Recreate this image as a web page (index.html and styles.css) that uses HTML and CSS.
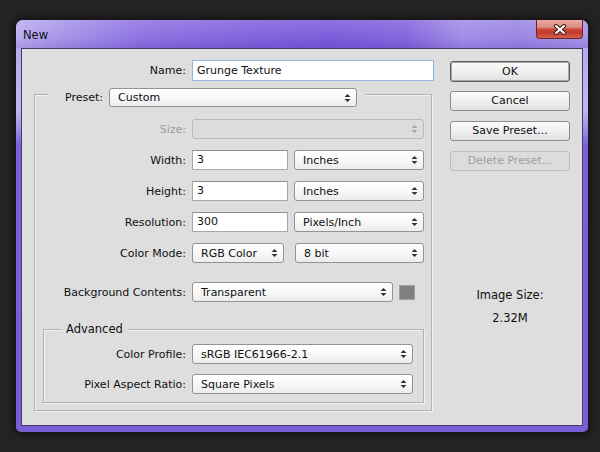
FILE: index.html
```
<!DOCTYPE html>
<html>
<head>
<meta charset="utf-8">
<link rel="stylesheet" href="styles.css">
</head>
<body>
<div class="window">
  <div class="titlebar">
    <span class="title">New</span>
    <div class="close">
      <svg width="14" height="11" viewBox="0 0 14 11"><path d="M3 2 L11 9 M11 2 L3 9" stroke="#3a2020" stroke-width="4" stroke-linecap="round"/><path d="M3 2 L11 9 M11 2 L3 9" stroke="#ffffff" stroke-width="2" stroke-linecap="round"/></svg>
    </div>
  </div>
  <div class="content">
    <div class="left">
      <div class="row name-row">
        <label class="lbl lbl-name">Name:</label>
        <div class="inp inp-name focus">Grunge Texture</div>
      </div>
      <div class="group outer">
        <div class="legend preset-legend">
          <label class="lbl-legend">Preset:</label>
          <div class="sel sel-preset"><span>Custom</span><svg class="arr" width="7" height="10" viewBox="0 0 7 10"><path d="M0.5 4 L3.5 1 L6.5 4 Z M0.5 6 L3.5 9 L6.5 6 Z" fill="#333"/></svg></div>
        </div>
        <div class="row">
          <label class="lbl disabled">Size:</label>
          <div class="sel sel-full dis"><span></span><svg class="arr" width="7" height="10" viewBox="0 0 7 10"><path d="M0.5 4 L3.5 1 L6.5 4 Z M0.5 6 L3.5 9 L6.5 6 Z" fill="#a8a8a8"/></svg></div>
        </div>
        <div class="row">
          <label class="lbl">Width:</label>
          <div class="inp inp-num">3</div>
          <div class="sel sel-unit"><span>Inches</span><svg class="arr" width="7" height="10" viewBox="0 0 7 10"><path d="M0.5 4 L3.5 1 L6.5 4 Z M0.5 6 L3.5 9 L6.5 6 Z" fill="#333"/></svg></div>
        </div>
        <div class="row">
          <label class="lbl">Height:</label>
          <div class="inp inp-num">3</div>
          <div class="sel sel-unit"><span>Inches</span><svg class="arr" width="7" height="10" viewBox="0 0 7 10"><path d="M0.5 4 L3.5 1 L6.5 4 Z M0.5 6 L3.5 9 L6.5 6 Z" fill="#333"/></svg></div>
        </div>
        <div class="row">
          <label class="lbl">Resolution:</label>
          <div class="inp inp-num">300</div>
          <div class="sel sel-unit"><span>Pixels/Inch</span><svg class="arr" width="7" height="10" viewBox="0 0 7 10"><path d="M0.5 4 L3.5 1 L6.5 4 Z M0.5 6 L3.5 9 L6.5 6 Z" fill="#333"/></svg></div>
        </div>
        <div class="row">
          <label class="lbl">Color Mode:</label>
          <div class="sel sel-mode"><span>RGB Color</span><svg class="arr" width="7" height="10" viewBox="0 0 7 10"><path d="M0.5 4 L3.5 1 L6.5 4 Z M0.5 6 L3.5 9 L6.5 6 Z" fill="#333"/></svg></div>
          <div class="sel sel-bit"><span>8 bit</span><svg class="arr" width="7" height="10" viewBox="0 0 7 10"><path d="M0.5 4 L3.5 1 L6.5 4 Z M0.5 6 L3.5 9 L6.5 6 Z" fill="#333"/></svg></div>
        </div>
        <div class="row bg-row">
          <label class="lbl">Background Contents:</label>
          <div class="sel sel-bg"><span>Transparent</span><svg class="arr" width="7" height="10" viewBox="0 0 7 10"><path d="M0.5 4 L3.5 1 L6.5 4 Z M0.5 6 L3.5 9 L6.5 6 Z" fill="#333"/></svg></div>
          <div class="swatch"></div>
        </div>
        <div class="group advanced">
          <div class="legend adv-legend">Advanced</div>
          <div class="row">
            <label class="lbl lbl-adv">Color Profile:</label>
            <div class="sel sel-adv"><span>sRGB IEC61966-2.1</span><svg class="arr" width="7" height="10" viewBox="0 0 7 10"><path d="M0.5 4 L3.5 1 L6.5 4 Z M0.5 6 L3.5 9 L6.5 6 Z" fill="#333"/></svg></div>
          </div>
          <div class="row">
            <label class="lbl lbl-adv">Pixel Aspect Ratio:</label>
            <div class="sel sel-adv"><span>Square Pixels</span><svg class="arr" width="7" height="10" viewBox="0 0 7 10"><path d="M0.5 4 L3.5 1 L6.5 4 Z M0.5 6 L3.5 9 L6.5 6 Z" fill="#333"/></svg></div>
          </div>
        </div>
      </div>
    </div>
    <div class="right">
      <div class="btn default">OK</div>
      <div class="btn">Cancel</div>
      <div class="btn">Save Preset...</div>
      <div class="btn disabled-btn">Delete Preset...</div>
      <div class="imgsize">Image Size:</div>
      <div class="imgval">2.32M</div>
    </div>
  </div>
</div>
</body>
</html>
```
FILE: styles.css
```
html, body {
  margin: 0;
  padding: 0;
}
body {
  width: 600px;
  height: 452px;
  background: #232323;
  font-family: "DejaVu Sans", Verdana, sans-serif;
  font-size: 11px;
  color: #101010;
  overflow: hidden;
}
.window {
  position: relative;
  margin: 20px 0 0 16px;
  width: 572px;
  height: 412px;
  box-sizing: border-box;
  padding: 0 5px 6px 5px;
  border-radius: 7px 7px 5px 5px;
  background: linear-gradient(180deg, #b3a4ea 0, #c2b6ef 90px, #9a84e4 112px, #7b5fd9 126px, #7a5ed8 100%);
  box-shadow: 0 0 7px 2px rgba(0, 0, 0, 0.55);
}
.titlebar {
  display: flex;
  align-items: flex-start;
  height: 28px;
  margin: 0 -5px;
  padding: 0 5px 0 7px;
  border-radius: 7px 7px 0 0;
  background:
    linear-gradient(180deg, rgba(255,255,255,0.16) 0, rgba(255,255,255,0.04) 60%, rgba(60,30,150,0.14) 100%),
    linear-gradient(90deg, #b9abee 0, #a592e8 8%, #8a6ee0 22%, #7e5fdc 40%, #7758da 55%, #8061dc 68%, #9f8ae6 78%, #9882e4 88%, #a593e8 100%);
}
.title {
  margin-top: 8px;
  font-size: 11.5px;
  color: #101018;
}
.close {
  margin-left: auto;
  width: 47px;
  height: 19px;
  box-sizing: border-box;
  border: 1px solid #6a2a26;
  border-top: none;
  border-radius: 0 0 4px 4px;
  background: linear-gradient(180deg, #e9aaa2 0, #dd8a80 40%, #c8483a 52%, #c23a2c 70%, #d8604e 100%);
  display: flex;
  align-items: center;
  justify-content: center;
}
.content {
  display: flex;
  height: 378px;
  box-sizing: border-box;
  border: 1px solid #463c6a;
  background: #dedede;
  padding: 11px 0 0 12px;
}
.left {
  width: 400px;
}
.row {
  display: flex;
  align-items: center;
  height: 20px;
  margin-bottom: 11px;
}
.lbl {
  width: 151px;
  margin-right: 6px;
  text-align: right;
  white-space: nowrap;
}
.lbl-name {
  width: 152px;
}
.lbl-adv {
  width: 142px;
}
.disabled {
  color: #9c9c9c;
}
.name-row {
  height: 21px;
  margin-bottom: 13px;
}
.inp {
  height: 20px;
  box-sizing: border-box;
  background: #fff;
  border: 1px solid #a8a8a8;
  border-top-color: #8c8c8c;
  padding-left: 4px;
  line-height: 18px;
  white-space: nowrap;
}
.inp-name {
  width: 242px;
  height: 21px;
  line-height: 19px;
}
.focus {
  border-color: #8fb8e4;
}
.inp-num {
  width: 96px;
  margin-right: 6px;
}
.sel {
  display: flex;
  align-items: center;
  height: 20px;
  box-sizing: border-box;
  border: 1px solid #939393;
  border-radius: 3px;
  background: linear-gradient(180deg, #ffffff 0, #f9f9f9 45%, #ececec 100%);
  padding: 0 5px 0 8px;
  white-space: nowrap;
}
.sel span {
  flex: 1;
}
.arr {
  flex: none;
}
.dis {
  background: #dcdcdc;
  border-color: #bababa;
}
.sel-full {
  width: 232px;
}
.sel-unit {
  width: 130px;
}
.sel-mode {
  width: 92px;
  margin-right: 11px;
}
.sel-bit {
  width: 129px;
}
.sel-bg {
  width: 201px;
  margin-right: 6px;
}
.swatch {
  width: 16px;
  height: 15px;
  background: #808080;
  border: 1px solid #a0a0a0;
  box-sizing: border-box;
}
.bg-row {
  margin-top: 19px;
  margin-bottom: 27px;
}
.sel-adv {
  width: 221px;
}
.group {
  position: relative;
  border: 1px solid #b2b2b2;
  box-shadow: inset 1px 1px 0 #f2f2f2, 1px 1px 0 #f2f2f2;
}
.outer {
  width: 398px;
  height: 317px;
  box-sizing: border-box;
  padding-top: 24px;
}
.advanced {
  width: 381px;
  height: 74px;
  box-sizing: border-box;
  margin-left: 8px;
  padding-top: 14px;
}
.advanced .row {
  margin-bottom: 10px;
}
.legend {
  position: absolute;
  background: #dedede;
}
.preset-legend {
  top: -7px;
  left: 13px;
  width: 318px;
  height: 19px;
  box-sizing: border-box;
  padding-left: 17px;
  display: flex;
  align-items: center;
}
.lbl-legend {
  margin-right: 6px;
}
.sel-preset {
  width: 248px;
  height: 19px;
}
.adv-legend {
  top: -9px;
  left: 18px;
  padding: 0 5px 0 4px;
  line-height: 16px;
  font-size: 11.5px;
}
.right {
  width: 120px;
  margin-left: 16px;
  display: flex;
  flex-direction: column;
  align-items: stretch;
}
.btn {
  height: 20px;
  box-sizing: border-box;
  border: 1px solid #8c8c8c;
  border-radius: 3px;
  background: linear-gradient(180deg, #fbfbfb 0, #f0f0f0 50%, #e0e0e0 100%);
  text-align: center;
  line-height: 18px;
  margin-bottom: 10px;
  white-space: nowrap;
}
.default {
  height: 21px;
  border-color: #5c5c5c;
  box-shadow: inset 0 0 0 1px #a8a8a8;
  line-height: 19px;
  margin-top: 1px;
  margin-bottom: 9px;
}
.disabled-btn {
  color: #a0a0a0;
  border-color: #bcbcbc;
  background: #dcdcdc;
}
.imgsize {
  margin-top: 106px;
  text-align: center;
  line-height: 16px;
  font-size: 11.5px;
}
.imgval {
  margin-top: 7px;
  text-align: center;
  line-height: 16px;
  font-size: 11.5px;
}
```
